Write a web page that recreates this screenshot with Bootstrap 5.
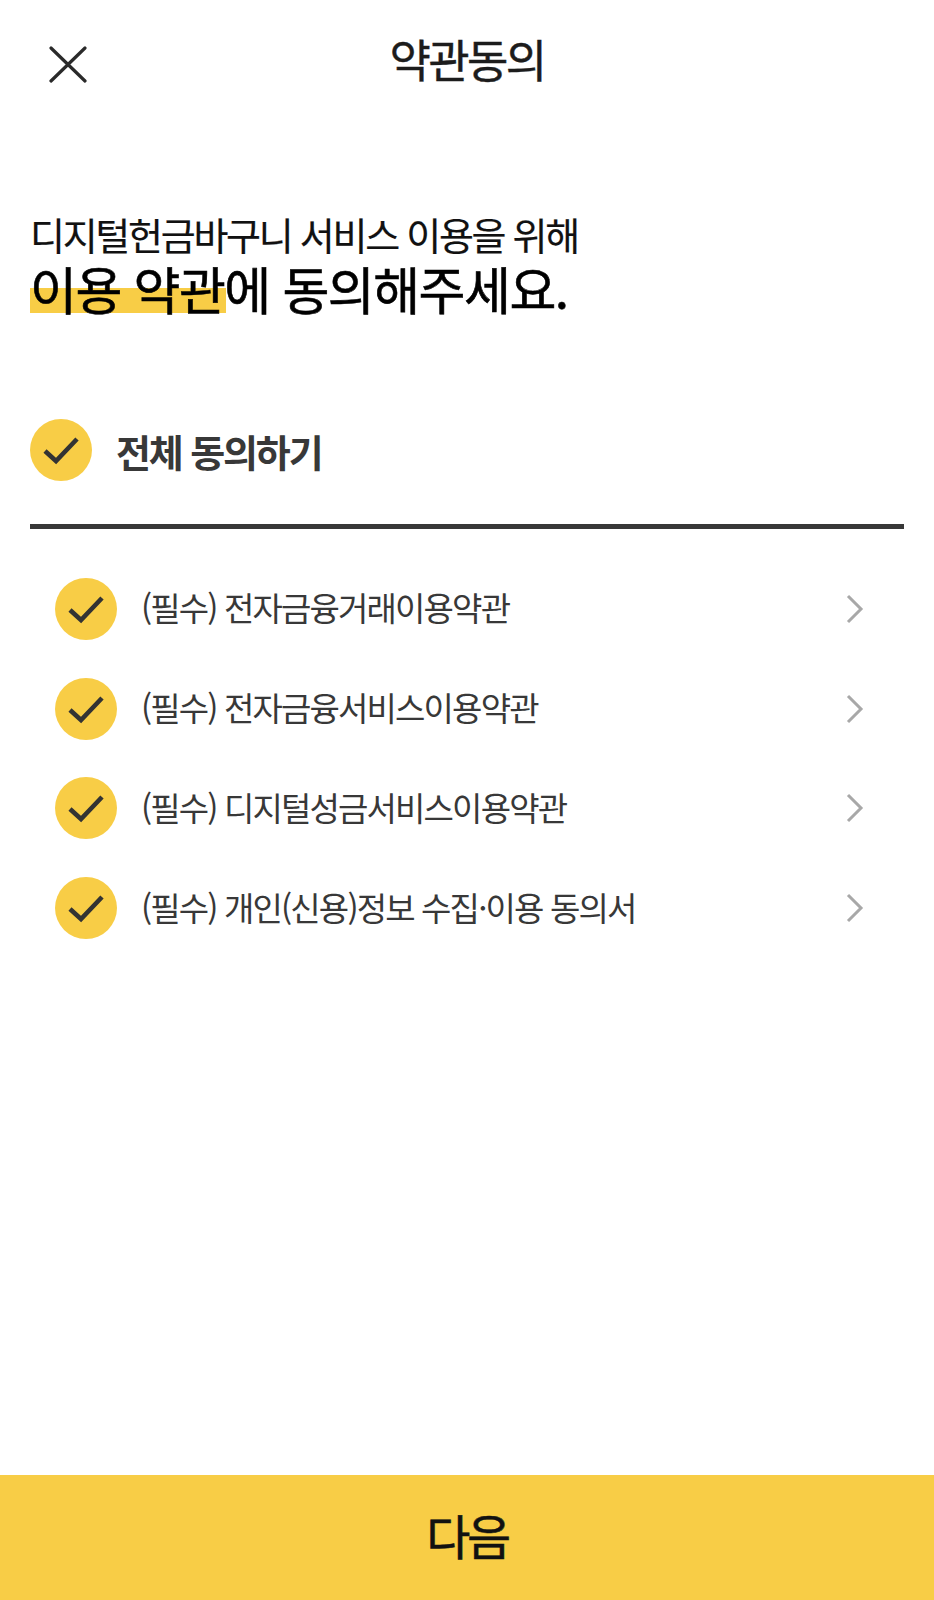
<!DOCTYPE html>
<html lang="ko"><head><meta charset="utf-8">
<link href="https://cdn.jsdelivr.net/npm/bootstrap@5.3.0/dist/css/bootstrap.min.css" rel="stylesheet">
<style>
html,body{height:100%}
body{font-family:"Noto Sans CJK KR","Liberation Sans",sans-serif;background:#fff;color:#000;letter-spacing:-.06em}
.pg{height:1600px}
.top{height:122px;padding:40px 30px 0}
.ttl{font-size:45px;font-weight:400;color:#1c1c1c;line-height:1;margin:0;letter-spacing:-.06em;top:36px;-webkit-text-stroke:.4px #1c1c1c}
.cls{width:38px;height:37px;margin-left:19px;margin-top:6px}
.hd{padding:90px 30px 0}
.h1a{font-size:38px;line-height:44px;margin:0;color:#111;letter-spacing:-.06em;-webkit-text-stroke:.2px #111}
.h1b{font-size:51px;line-height:56px;font-weight:400;color:#000;margin:4px 0 0;letter-spacing:-.03em;-webkit-text-stroke:.6px #000}
.hl{display:inline-block;line-height:56px;padding-right:2px;margin-right:-2px;background:linear-gradient(transparent 50%,#f8cd46 50%,#f8cd46 94%,transparent 94%)}
.ck{width:62px;height:62px;flex:none}
.all{margin:103px 30px 0;padding-bottom:43px;border-bottom:5px solid #383838}
.allt{font-size:38px;font-weight:700;color:#383838;letter-spacing:-.056em}
.lst{padding:30px 30px 0 55px}
.rw{height:99.8px;padding-right:40px}
.rwt{font-size:33px;color:#383838;letter-spacing:-.056em;padding-bottom:2px}
.chev{width:18px;height:30px}
.nx{height:125px;background:#f8cd46;font-size:48px;font-weight:400;color:#111;border-radius:0;border:0;letter-spacing:-.07em;padding-bottom:14px;-webkit-text-stroke:.5px #111}
</style></head><body>
<div class="pg d-flex flex-column">
<div class="top d-flex align-items-start position-relative">
<svg class="cls" viewBox="0 0 38 37"><path d="M2 2L36 35M36 2L2 35" stroke="#2a2a2a" stroke-width="3.2" stroke-linecap="round" fill="none"/></svg>
<h1 class="ttl position-absolute start-50 translate-middle-x">약관동의</h1>
</div>
<div class="hd"><p class="h1a">디지털헌금바구니 서비스 이용을 위해</p><p class="h1b"><span class="hl">이용 약관</span>에 동의해주세요.</p></div>
<div class="all d-flex align-items-center gap-4"><svg class="ck" viewBox="0 0 62 62"><circle cx="31" cy="31" r="31" fill="#f8cd46"/><path d="M15 32L26 42L47 20" stroke="#333" stroke-width="4.6" fill="none"/></svg><span class="allt">전체 동의하기</span></div>
<div class="lst">
<div class="rw d-flex align-items-center gap-4"><svg class="ck" viewBox="0 0 62 62"><circle cx="31" cy="31" r="31" fill="#f8cd46"/><path d="M15 32L26 42L47 20" stroke="#333" stroke-width="4.6" fill="none"/></svg><span class="rwt flex-grow-1">(필수) 전자금융거래이용약관</span><svg class="chev" viewBox="0 0 18 30"><path d="M2 2L15 15L2 28" stroke="#a8a8a8" stroke-width="3" fill="none"/></svg></div>
<div class="rw d-flex align-items-center gap-4"><svg class="ck" viewBox="0 0 62 62"><circle cx="31" cy="31" r="31" fill="#f8cd46"/><path d="M15 32L26 42L47 20" stroke="#333" stroke-width="4.6" fill="none"/></svg><span class="rwt flex-grow-1">(필수) 전자금융서비스이용약관</span><svg class="chev" viewBox="0 0 18 30"><path d="M2 2L15 15L2 28" stroke="#a8a8a8" stroke-width="3" fill="none"/></svg></div>
<div class="rw d-flex align-items-center gap-4"><svg class="ck" viewBox="0 0 62 62"><circle cx="31" cy="31" r="31" fill="#f8cd46"/><path d="M15 32L26 42L47 20" stroke="#333" stroke-width="4.6" fill="none"/></svg><span class="rwt flex-grow-1">(필수) 디지털성금서비스이용약관</span><svg class="chev" viewBox="0 0 18 30"><path d="M2 2L15 15L2 28" stroke="#a8a8a8" stroke-width="3" fill="none"/></svg></div>
<div class="rw d-flex align-items-center gap-4"><svg class="ck" viewBox="0 0 62 62"><circle cx="31" cy="31" r="31" fill="#f8cd46"/><path d="M15 32L26 42L47 20" stroke="#333" stroke-width="4.6" fill="none"/></svg><span class="rwt flex-grow-1">(필수) 개인(신용)정보 수집·이용 동의서</span><svg class="chev" viewBox="0 0 18 30"><path d="M2 2L15 15L2 28" stroke="#a8a8a8" stroke-width="3" fill="none"/></svg></div>
</div>
<button class="btn nx w-100 mt-auto">다음</button>
</div>
<script src="https://cdn.jsdelivr.net/npm/bootstrap@5.3.0/dist/js/bootstrap.bundle.min.js"></script>
</body></html>
